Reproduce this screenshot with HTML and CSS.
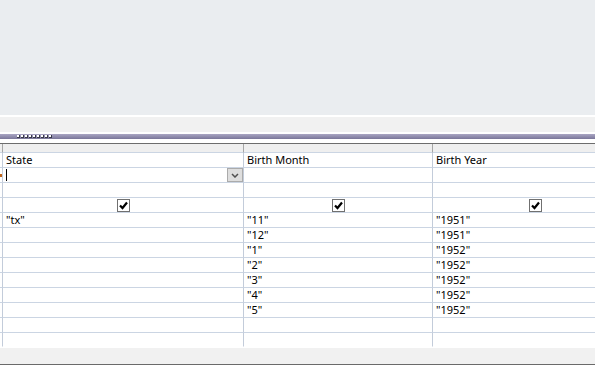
FILE: index.html
```html
<!DOCTYPE html>
<html lang="en">
<head>
    <meta charset="UTF-8">
    <title>Query Design</title>
    <link rel="stylesheet" href="styles.css">
</head>
<body>
    <div class="table-pane"></div>
    <div class="pane-edge"></div>
    <div class="pane-foot"></div>
    <div class="pane-edge"></div>
    <div class="splitter">
        <div class="grip">
            <span></span><span></span><span></span><span></span><span></span>
            <span></span><span></span><span></span><span></span>
        </div>
    </div>
    <div class="splitter-gap"></div>

    <div class="design-grid">
        <div class="row selectors">
            <div class="cell sel"></div>
            <div class="cell"></div>
            <div class="cell"></div>
            <div class="cell"></div>
        </div>
        <div class="row">
            <div class="cell sel"></div>
            <div class="cell">State</div>
            <div class="cell">Birth Month</div>
            <div class="cell">Birth Year</div>
        </div>
        <div class="row">
            <div class="cell sel"><span class="current"></span></div>
            <div class="cell combo">
                <span class="caret"></span>
                <span class="drop-btn">
                    <svg width="8" height="5" viewBox="0 0 8 5"><path d="M1 1 L4 4 L7 1" fill="none" stroke="#505050" stroke-width="1.5"/></svg>
                </span>
            </div>
            <div class="cell"></div>
            <div class="cell"></div>
        </div>
        <div class="row">
            <div class="cell sel"></div>
            <div class="cell"></div>
            <div class="cell"></div>
            <div class="cell"></div>
        </div>
        <div class="row">
            <div class="cell sel"></div>
            <div class="cell check"><span class="box"><svg width="11" height="11" viewBox="0 0 11 11"><path d="M2 5.5 L4.5 8 L9 2.5" fill="none" stroke="#000" stroke-width="2.2"/></svg></span></div>
            <div class="cell check"><span class="box"><svg width="11" height="11" viewBox="0 0 11 11"><path d="M2 5.5 L4.5 8 L9 2.5" fill="none" stroke="#000" stroke-width="2.2"/></svg></span></div>
            <div class="cell check"><span class="box"><svg width="11" height="11" viewBox="0 0 11 11"><path d="M2 5.5 L4.5 8 L9 2.5" fill="none" stroke="#000" stroke-width="2.2"/></svg></span></div>
        </div>
        <div class="row"><div class="cell sel"></div><div class="cell">"tx"</div><div class="cell">"11"</div><div class="cell">"1951"</div></div>
        <div class="row"><div class="cell sel"></div><div class="cell"></div><div class="cell">"12"</div><div class="cell">"1951"</div></div>
        <div class="row"><div class="cell sel"></div><div class="cell"></div><div class="cell">"1"</div><div class="cell">"1952"</div></div>
        <div class="row"><div class="cell sel"></div><div class="cell"></div><div class="cell">"2"</div><div class="cell">"1952"</div></div>
        <div class="row"><div class="cell sel"></div><div class="cell"></div><div class="cell">"3"</div><div class="cell">"1952"</div></div>
        <div class="row"><div class="cell sel"></div><div class="cell"></div><div class="cell">"4"</div><div class="cell">"1952"</div></div>
        <div class="row"><div class="cell sel"></div><div class="cell"></div><div class="cell">"5"</div><div class="cell">"1952"</div></div>
        <div class="row"><div class="cell sel"></div><div class="cell"></div><div class="cell"></div><div class="cell"></div></div>
        <div class="row"><div class="cell sel"></div><div class="cell"></div><div class="cell"></div><div class="cell"></div></div>
    </div>
    <div class="grid-foot"></div>
</body>
</html>
```

FILE: styles.css
```css
* {
    margin: 0;
    padding: 0;
    box-sizing: border-box;
}

body {
    font-family: 'Noto Sans', 'Open Sans', sans-serif;
    font-size: 11px;
    color: #000;
    background: #fff;
    width: 595px;
    overflow: hidden;
}

.table-pane {
    height: 115px;
    background: #eaedf0;
}

.pane-edge {
    height: 2px;
    background: #fff;
}

.pane-foot {
    height: 15px;
    background: #f1f1f1;
}

.splitter {
    height: 5px;
    background: linear-gradient(#a9a5c3, #7a7699);
    padding-left: 17px;
}

.grip {
    display: flex;
    gap: 1px;
    padding-top: 1px;
}

.grip span {
    width: 3px;
    height: 3px;
    background: #fff;
    border-right: 1px solid #3a3a4a;
    border-bottom: 1px solid #3a3a4a;
}

.splitter-gap {
    height: 4px;
    background: #fff;
}

.design-grid {
    border-top: 1px solid #6d6d6d;
    background: #fff;
    width: 595px;
    overflow: hidden;
}

.row {
    display: grid;
    grid-template-columns: 3px 241px 189px 206px;
    height: 15px;
}

.cell {
    border-right: 1px solid #c3ccda;
    border-bottom: 1px solid #cbd5e3;
    padding-left: 3px;
    line-height: 14px;
    white-space: nowrap;
    overflow: hidden;
}

.row:last-child .cell {
    border-bottom-color: transparent;
    height: 14px;
}

.cell.sel {
    padding: 0;
    position: relative;
}

.selectors {
    height: 9px;
    background: #efefef;
}

.selectors .cell {
    border-right-color: #a7a7a7;
}

.current {
    position: absolute;
    left: 0;
    top: 6px;
    width: 2px;
    height: 3px;
    background: #c0661c;
}

.combo {
    display: flex;
    justify-content: space-between;
    padding-right: 0;
}

.caret {
    width: 1px;
    height: 12px;
    margin-top: 1px;
    background: #000;
}

.drop-btn {
    width: 16px;
    height: 14px;
    border: 1px solid #ababab;
    background: #dedede;
    display: flex;
    align-items: center;
    justify-content: center;
}

.check {
    display: flex;
    justify-content: center;
    align-items: center;
    padding: 0;
}

.box {
    width: 13px;
    height: 13px;
    border: 1px solid #707070;
    background: #fff;
    display: flex;
    align-items: center;
    justify-content: center;
}

.box svg {
    display: block;
}

.grid-foot {
    height: 17px;
    background: #f1f1f1;
    border-bottom: 1px solid #6a6a6a;
}
```
